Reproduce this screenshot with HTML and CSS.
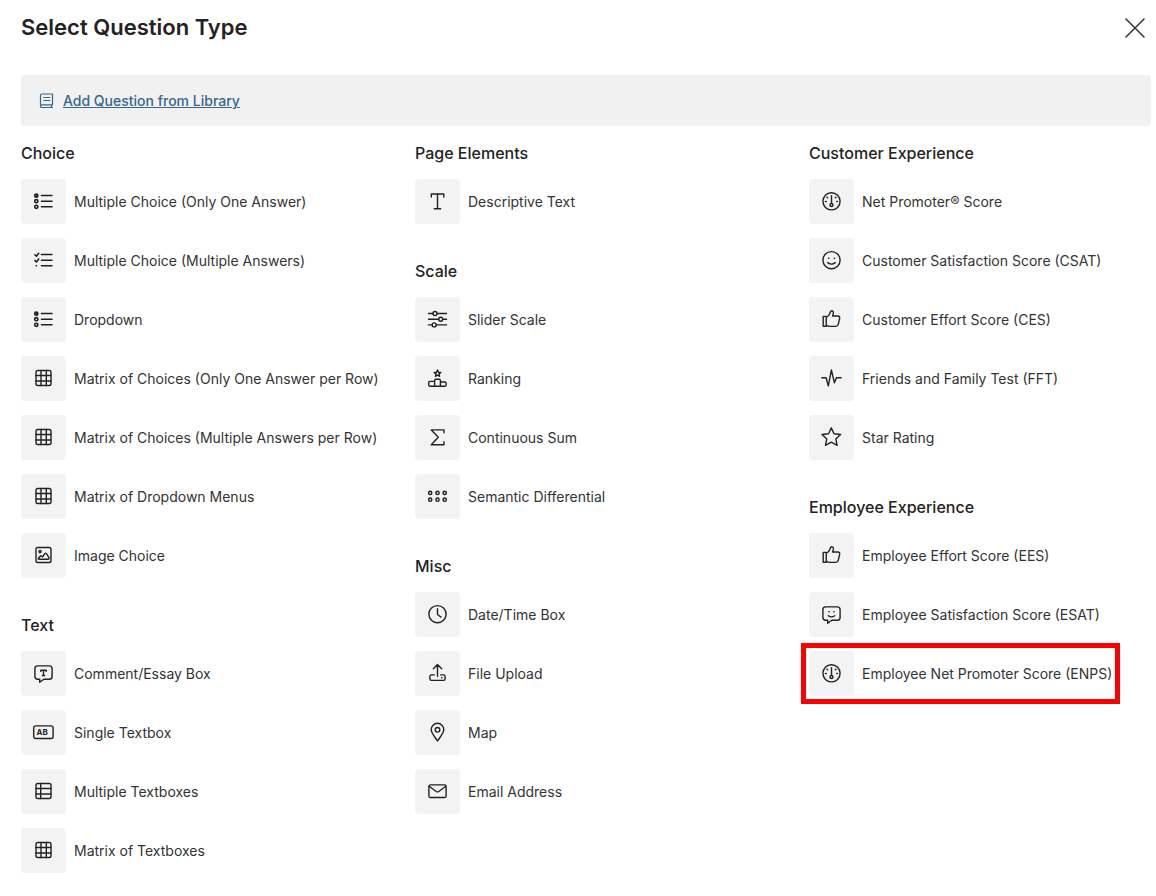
FILE: index.html
```
<!DOCTYPE html>
<html lang="en">
<head>
    <meta charset="UTF-8">
    <meta name="viewport" content="width=device-width, initial-scale=1.0">
    <title>Select Question Type</title>
    <link rel="stylesheet" href="styles.css">
</head>
<body>

<!-- Icon set -->
<svg class="sprite" aria-hidden="true">
    <symbol id="list" viewBox="0 0 21 21">
        <g stroke-width="1.6"><circle cx="3.3" cy="4.7" r="1.6"/><circle cx="3.3" cy="4.7" r=".5"/>
        <circle cx="3.3" cy="10.2" r="1.6"/><circle cx="3.3" cy="15.8" r="1.6"/></g>
        <path d="M8.4 4.5h10.700M8.400 10.300h10.700M8.400 15.800h10.700"/>
    </symbol>
    <symbol id="checks" viewBox="0 0 21 21">
        <path stroke-width="1.6" d="M1.900 4.800l1.500 1.500 2.300-3M1.900 10.500L3.400 12l2.300-3M3.200 15.800h.3"/>
        <path d="M8.400 4.500h10.700M8.400 10.300h10.700M8.400 15.800h10.700"/>
    </symbol>
    <symbol id="grid" viewBox="0 0 21 21">
        <rect x="3" y="2.500" width="15" height="15" rx="1.800"/>
        <path d="M8 2.500v15M13.300 2.500v15M3 7.500h15M3 13h15"/>
    </symbol>
    <symbol id="table" viewBox="0 0 21 21">
        <rect x="3" y="2.500" width="15" height="15" rx="1.800"/>
        <path d="M7.700 2.500v15M3 7.500h15M3 13h15"/>
    </symbol>
    <symbol id="image" viewBox="0 0 21 21">
        <rect x="3" y="2.500" width="15" height="15" rx="1.800"/>
        <circle cx="7" cy="6.600" r="1.100"/>
        <path d="M5.300 13.500l1.800-2.300q.8-.8 1.600 0l.9.600 2.200-3.200q.8-1 1.600 0l2.600 4.100q.5 1.300-.8 1.500H6.200q-1.200 0-.9-.7z"/>
    </symbol>
    <symbol id="comment" viewBox="0 0 21 21">
        <path d="M4.700 2.900h11.600q2.800 0 2.800 2.800v7.800q0 2.800-2.800 2.800h-5.500l-4.100 3v-3h-2q-2.800 0-2.800-2.800V5.700q0-2.800 2.800-2.800zM7.800 8.400V7.300h5.400v1.100M10.500 7.300v5.200M9.400 12.500h2.200"/>
    </symbol>
    <symbol id="textbox" viewBox="0 0 21 21">
        <rect x=".7" y="3.900" width="19.400" height="12.600" rx="2"/>
        <text x="3.500" y="13.200">AB</text>
    </symbol>
    <symbol id="type" viewBox="0 0 21 21">
        <path d="M4.300 6V3h12.500v3M10.500 3v14.800M7.300 17.800h6.400"/>
    </symbol>
    <symbol id="sliders" viewBox="0 0 21 21">
        <circle cx="8" cy="4.500" r="2"/><circle cx="13.700" cy="10.300" r="2"/><circle cx="7.200" cy="15.900" r="2"/>
        <path d="M1.500 4.500H6M10 4.500h9.500M1.500 10.300h10.200M15.700 10.300h3.800M1.500 15.900h3.700M9.200 15.900h10.300"/>
    </symbol>
    <symbol id="ranking" viewBox="0 0 21 21">
        <path d="M10.500 2l1 2.200 2.300.2-1.800 1.500.6 2.400-2.100-1.300-2.100 1.300.6-2.400-1.800-1.500 2.300-.2z"/>
        <path d="M7.600 18.200H2.900q-1.200 0-1.200-1.200v-2.400q0-1.200 1.200-1.200h4.700zM7.600 18.200v-5.700q0-1.300 1.300-1.300h3.200q1.300 0 1.300 1.300v5.700zM13.400 14h4.400q1.300 0 1.300 1.200V17q0 1.200-1.300 1.200h-4.400z"/>
    </symbol>
    <symbol id="sum" viewBox="0 0 21 21">
        <path d="M17 5.800V2.900H4.300l7 7.400-7 7.400H17v-2.900"/>
    </symbol>
    <symbol id="dots" viewBox="0 0 21 21">
        <g stroke-width="1.500"><circle cx="3.200" cy="6.900" r="1.600"/><circle cx="10.500" cy="6.900" r="1.600"/><circle cx="17.700" cy="6.900" r="1.600"/>
        <circle cx="3.200" cy="13.700" r="1.600"/><circle cx="10.500" cy="13.700" r="1.600"/><circle cx="17.700" cy="13.700" r="1.600"/></g>
    </symbol>
    <symbol id="clock" viewBox="0 0 21 21">
        <circle cx="10.500" cy="10.200" r="8.600"/>
        <path d="M10.500 4.700v5.800l3.500 2.600"/>
    </symbol>
    <symbol id="upload" viewBox="0 0 21 21">
        <path d="M10.500 13.300V2M6.300 5.800l4.200-4.200 4.200 4.200M7.300 11.900H4.500q-1.600 0-1.600 1.600v2.300q0 1.600 1.600 1.600h12q1.600 0 1.600-1.600v-2.300q0-1.600-1.600-1.600h-2.800M14.600 14.700h.4"/>
    </symbol>
    <symbol id="pin" viewBox="0 0 21 21">
        <path d="M10.500 18.800C8.300 15.600 4.200 11.400 4.200 7.600a6.300 6.300 0 0 1 12.600 0c0 3.800-4.100 8-6.300 11.200z"/>
        <circle cx="10.500" cy="7.800" r="2.300"/>
    </symbol>
    <symbol id="mail" viewBox="0 0 21 21">
        <rect x="1.900" y="3.900" width="17.200" height="12.600" rx="1.600"/>
        <path d="M2.200 5.300l7 5.200q1.300.8 2.600 0l7-5.200"/>
    </symbol>
    <symbol id="gauge" viewBox="0 0 21 21">
        <circle cx="10.500" cy="10.300" r="8.600"/>
        <circle cx="10.500" cy="14" r="1.500"/>
        <path d="M10.500 4.700v7.800M4.500 10.500h.8M15.700 10.500h.8M6 6.200l.6.600M15 6.200l-.6.600"/>
    </symbol>
    <symbol id="smile" viewBox="0 0 21 21">
        <circle cx="10.500" cy="10.200" r="8.600"/>
        <path d="M7.600 8.300h.3M13.200 8.300h.3M6.700 12.600q3.800 3 7.600 0"/>
    </symbol>
    <symbol id="thumb" viewBox="0 0 21 21">
        <path d="M2.200 7.400h3v9.900h-3zM5.200 8.300q2.500-.9 3.300-3.200l.9-2.200q.7-1.500 2-1.100 1.400.6 1 2.300l-.8 2.900h5.200q2.200.3 1.900 2.200l-1.400 6q-.5 2.200-2.400 2.200H9q-2 0-3.800-1.300z"/>
    </symbol>
    <symbol id="pulse" viewBox="0 0 21 21">
        <path d="M.8 9.700h4.300l2.200 8.200L10.400 2l3 12.800 2-5.100h4.800"/>
    </symbol>
    <symbol id="star" viewBox="0 0 21 21">
        <path d="M10.300.9l2.700 5.800 6.600.8-4.800 4.400 1.300 6.400-5.800-3.200-5.800 3.200 1.300-6.400L1 7.500l6.600-.8z"/>
    </symbol>
    <symbol id="bubble" viewBox="0 0 21 21">
        <path d="M4.700 2.900h11.600q2.800 0 2.800 2.800v7.800q0 2.800-2.800 2.800h-5.500l-4.100 3v-3h-2q-2.800 0-2.800-2.800V5.700q0-2.800 2.800-2.800zM7.900 7.800h.3M12.800 7.800h.3M7.300 11.700q3.200 2.400 6.400 0"/>
    </symbol>
</svg>

<main class="dialog">
    <header class="header">
        <h1>Select Question Type</h1>
        <button class="close" type="button" aria-label="Close">
            <svg viewBox="0 0 20 20"><path d="M1 1l18 18M19 1L1 19"/></svg>
        </button>
    </header>

    <div class="library">
        <a href="#library">
            <svg viewBox="0 0 14 16"><path d="M1 13V2.500Q1 1 2.500 1H13v10.800H2.500Q1 11.800 1 13.200T2.500 14.500H13M12 11.800v2.700M4.300 4.500h6M4.300 7.500h6"/></svg>
            <span>Add Question from Library</span>
        </a>
    </div>

    <div class="columns">
        <!-- Choice / Text -->
        <div class="column">
            <section>
                <h2>Choice</h2>
                <ul>
                    <li><button type="button"><span class="icon"><svg><use href="#list"/></svg></span>Multiple Choice (Only One Answer)</button></li>
                    <li><button type="button"><span class="icon"><svg><use href="#checks"/></svg></span>Multiple Choice (Multiple Answers)</button></li>
                    <li><button type="button"><span class="icon"><svg><use href="#list"/></svg></span>Dropdown</button></li>
                    <li><button type="button"><span class="icon"><svg><use href="#grid"/></svg></span>Matrix of Choices (Only One Answer per Row)</button></li>
                    <li><button type="button"><span class="icon"><svg><use href="#grid"/></svg></span>Matrix of Choices (Multiple Answers per Row)</button></li>
                    <li><button type="button"><span class="icon"><svg><use href="#grid"/></svg></span>Matrix of Dropdown Menus</button></li>
                    <li><button type="button"><span class="icon"><svg><use href="#image"/></svg></span>Image Choice</button></li>
                </ul>
            </section>
            <section>
                <h2>Text</h2>
                <ul>
                    <li><button type="button"><span class="icon"><svg><use href="#comment"/></svg></span>Comment/Essay Box</button></li>
                    <li><button type="button"><span class="icon"><svg aria-hidden="true"><use href="#textbox"/></svg></span>Single Textbox</button></li>
                    <li><button type="button"><span class="icon"><svg><use href="#table"/></svg></span>Multiple Textboxes</button></li>
                    <li><button type="button"><span class="icon"><svg><use href="#grid"/></svg></span>Matrix of Textboxes</button></li>
                </ul>
            </section>
        </div>

        <!-- Page Elements / Scale / Misc -->
        <div class="column">
            <section>
                <h2>Page Elements</h2>
                <ul>
                    <li><button type="button"><span class="icon"><svg><use href="#type"/></svg></span>Descriptive Text</button></li>
                </ul>
            </section>
            <section>
                <h2>Scale</h2>
                <ul>
                    <li><button type="button"><span class="icon"><svg><use href="#sliders"/></svg></span>Slider Scale</button></li>
                    <li><button type="button"><span class="icon"><svg><use href="#ranking"/></svg></span>Ranking</button></li>
                    <li><button type="button"><span class="icon"><svg><use href="#sum"/></svg></span>Continuous Sum</button></li>
                    <li><button type="button"><span class="icon"><svg><use href="#dots"/></svg></span>Semantic Differential</button></li>
                </ul>
            </section>
            <section>
                <h2>Misc</h2>
                <ul>
                    <li><button type="button"><span class="icon"><svg><use href="#clock"/></svg></span>Date/Time Box</button></li>
                    <li><button type="button"><span class="icon"><svg><use href="#upload"/></svg></span>File Upload</button></li>
                    <li><button type="button"><span class="icon"><svg><use href="#pin"/></svg></span>Map</button></li>
                    <li><button type="button"><span class="icon"><svg><use href="#mail"/></svg></span>Email Address</button></li>
                </ul>
            </section>
        </div>

        <!-- Customer / Employee Experience -->
        <div class="column">
            <section>
                <h2>Customer Experience</h2>
                <ul>
                    <li><button type="button"><span class="icon"><svg><use href="#gauge"/></svg></span>Net Promoter® Score</button></li>
                    <li><button type="button"><span class="icon"><svg><use href="#smile"/></svg></span>Customer Satisfaction Score (CSAT)</button></li>
                    <li><button type="button"><span class="icon"><svg><use href="#thumb"/></svg></span>Customer Effort Score (CES)</button></li>
                    <li><button type="button"><span class="icon"><svg><use href="#pulse"/></svg></span>Friends and Family Test (FFT)</button></li>
                    <li><button type="button"><span class="icon"><svg><use href="#star"/></svg></span>Star Rating</button></li>
                </ul>
            </section>
            <section>
                <h2>Employee Experience</h2>
                <ul>
                    <li><button type="button"><span class="icon"><svg><use href="#thumb"/></svg></span>Employee Effort Score (EES)</button></li>
                    <li><button type="button"><span class="icon"><svg><use href="#bubble"/></svg></span>Employee Satisfaction Score (ESAT)</button></li>
                    <li><button class="highlight" type="button"><span class="icon"><svg><use href="#gauge"/></svg></span>Employee Net Promoter Score (ENPS)</button></li>
                </ul>
            </section>
        </div>
    </div>
</main>

</body>
</html>
```
FILE: styles.css
```
/* Basic Reset */
* {
    margin: 0;
    padding: 0;
    box-sizing: border-box;
}
body {
    font-family: Inter, "Liberation Sans", sans-serif;
    font-size: 14px;
    background-color: #fff;
    color: #333;
}
ul {
    list-style: none;
}
button {
    font: inherit;
    color: inherit;
    background: none;
    border: none;
    cursor: pointer;
}
svg {
    display: block;
    fill: none;
    stroke: currentColor;
    stroke-linecap: round;
    stroke-linejoin: round;
}
.sprite {
    display: none;
}
.dialog {
    padding: 12px 5px 16px 21px;
}

/* Header */
.header {
    display: flex;
    justify-content: space-between;
    align-items: flex-start;
    margin-bottom: 31px;
}
.header h1 {
    font-size: 22px;
    font-weight: 600;
    line-height: 30px;
    color: #222;
}
.close {
    padding: 6px;
}
.close svg {
    width: 20px;
    height: 20px;
    stroke-width: 1.5;
}

/* Library bar */
.library {
    padding: 15px 18px;
    margin-bottom: 16px;
    background-color: #f1f1f1;
    border-radius: 4px;
}
.library a {
    display: inline-flex;
    align-items: center;
    gap: 9px;
    font-weight: 500;
    line-height: 21px;
    color: #36678a;
    text-decoration: none;
    vertical-align: top;
}
.library span {
    text-decoration: underline;
}
.library svg {
    width: 15px;
    height: 16px;
    stroke-width: 1.2;
}

/* Question types */
.columns {
    display: grid;
    grid-template-columns: repeat(3, minmax(0, 1fr));
    gap: 52px;
}
.column {
    display: flex;
    flex-direction: column;
    gap: 36px;
}
.column h2 {
    margin-bottom: 15px;
    font-size: 16px;
    font-weight: 500;
    line-height: 22px;
    color: #222;
}
.column ul {
    display: flex;
    flex-direction: column;
    gap: 14px;
}
.column button {
    display: flex;
    align-items: center;
    gap: 8px;
    text-align: left;
    white-space: nowrap;
}
.icon {
    padding: 12px;
    background-color: #f3f3f3;
    border-radius: 4px;
    color: #222;
}
.icon svg {
    width: 21px;
    height: 21px;
    stroke-width: 1.4;
}
.sprite text {
    font-size: 8px;
    font-weight: 700;
    fill: currentColor;
    stroke: none;
}
.column .highlight {
    outline: 5px solid #f00;
    outline-offset: 3px;
}
```
